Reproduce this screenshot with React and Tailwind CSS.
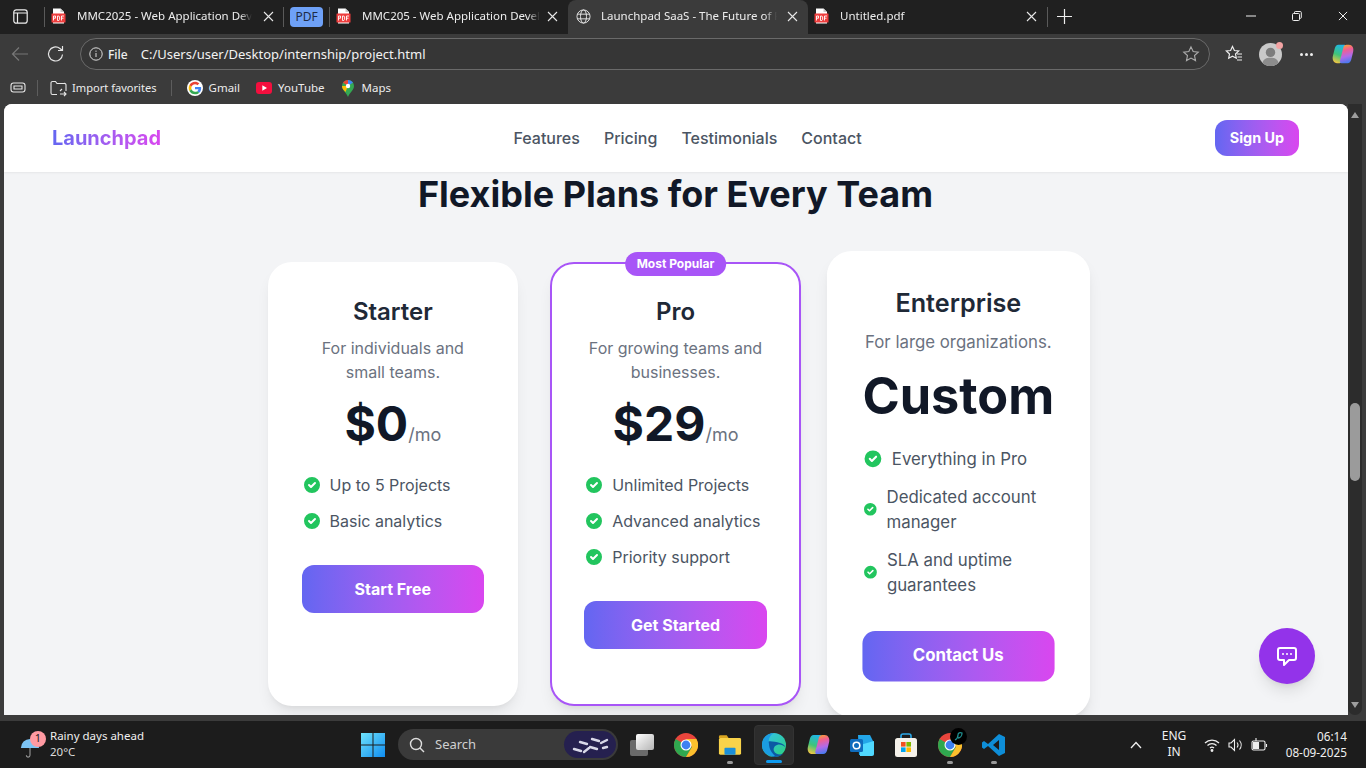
import React from "react";

const uiFont = { fontFamily: '"Noto Sans", "Open Sans", sans-serif' };

const PdfIcon = () => (
  <svg width="15" height="16" viewBox="0 0 15 16" className="shrink-0">
    <path d="M2 0.5h7.500l3.500 3.500v11.500H2z" fill="#fff" />
    <path d="M9.500 0.500l3.500 3.500H9.500z" fill="#c9c9c9" />
    <rect x="0.500" y="5.500" width="14" height="9" rx="0.500" fill="#ee3d3d" />
    <path d="M2.500 8v4.500M2.500 8h2v2.200h-2M6.500 8v4.500h1.300l.8-1V9l-.8-1H6.500M10.500 8v4.500M10.500 8h2.500M10.500 10.200h2" stroke="#fff" strokeWidth="0.900" fill="none" />
  </svg>
);

const X = ({ size = 11, color = "#e8e8e8" }) => (
  <svg width={size} height={size} viewBox="0 0 11 11" className="shrink-0">
    <path d="M1 1l9 9M10 1l-9 9" stroke={color} strokeWidth="1.100" />
  </svg>
);

const Globe = () => (
  <svg width="15" height="15" viewBox="0 0 16 16" fill="none" stroke="#e6e6e6" strokeWidth="1" className="shrink-0">
    <circle cx="8" cy="8" r="7" />
    <ellipse cx="8" cy="8" rx="3.200" ry="7" />
    <path d="M1.400 5.500h13.200M1.400 10.500h13.200" />
  </svg>
);

const Tab = ({ title, active, width, icon, iconMl, titleMl, textWidth, closeGap }) => (
  <div
    className={`flex items-center self-stretch pb-[2px] shrink-0 ${active ? "bg-[#3b3b3b] rounded-t-lg" : ""}`}
    style={{ width }}
  >
    <div className="w-[15px] flex justify-center" style={{ marginLeft: iconMl }}>
      {icon}
    </div>
    <span
      className="text-[11.5px] text-[#ededed] whitespace-nowrap overflow-hidden [mask-image:linear-gradient(90deg,#000_93%,transparent)]"
      style={{ width: textWidth, marginLeft: titleMl }}
    >
      {title}
    </span>
    <div style={{ marginLeft: closeGap }}>
      <X />
    </div>
  </div>
);

const TabDivider = () => <div className="w-px h-5 bg-[#5a5a5a] shrink-0" />;

const TabStrip = () => (
  <div className="flex items-center h-[34px] bg-[#202020] shrink-0" style={uiFont}>
    <div className="w-11 pr-1 pb-[2px] flex justify-center">
      <svg width="15" height="15" viewBox="0 0 15 15" fill="none" stroke="#eee" strokeWidth="1.200">
        <rect x="0.800" y="0.800" width="13.400" height="13.400" rx="2.500" />
        <path d="M0.800 4h13.400M4.500 4v10" />
      </svg>
    </div>
    <TabDivider />
    <Tab title="MMC2025 - Web Application Development" width={238} iconMl={6} titleMl={11} textWidth={175} closeGap={11} icon={<PdfIcon />} />
    <TabDivider />
    <div className="h-5 w-[33px] rounded bg-[#6ea1f7] text-[#1d2b45] text-[12px] flex items-center justify-center mx-[6px]">PDF</div>
    <TabDivider />
    <Tab title="MMC205 - Web Application Development" width={238} iconMl={6} titleMl={11} textWidth={178} closeGap={7} icon={<PdfIcon />} />
    <Tab title="Launchpad SaaS - The Future of Productivity" active width={240} iconMl={8} titleMl={10} textWidth={176} closeGap={10} icon={<Globe />} />
    <Tab title="Untitled.pdf" width={239} iconMl={6} titleMl={11} textWidth={176} closeGap={10} icon={<PdfIcon />} />
    <TabDivider />
    <div className="w-8 pb-[2px] flex items-center justify-center">
      <svg width="15" height="15" viewBox="0 0 15 15" stroke="#eee" strokeWidth="1.200">
        <path d="M7.500 0v15M0 7.500h15" />
      </svg>
    </div>
    <div className="ml-auto flex items-center pb-[2px]">
      <div className="w-[46px] flex justify-center">
        <svg width="10" height="10" viewBox="0 0 10 10" stroke="#eee">
          <path d="M0 5h10" />
        </svg>
      </div>
      <div className="w-[46px] flex justify-center">
        <svg width="10" height="10" viewBox="0 0 10 10" fill="none" stroke="#eee">
          <rect x="0.500" y="2.500" width="7" height="7" rx="1" />
          <path d="M2.500 2V1.200a.8.8 0 01.8-.7h5a1 1 0 011 1v5a.8.8 0 01-.8.8H8" />
        </svg>
      </div>
      <div className="w-[46px] flex justify-center">
        <X size={10} color="#eee" />
      </div>
    </div>
  </div>
);

const Copilot = ({ id, size = 22 }) => (
  <svg width={size} height={size} viewBox="0 0 24 24" className="block">
    <defs>
      <linearGradient id={`${id}A`} x1="0.600" y1="0" x2="0.300" y2="1">
        <stop offset="0" stopColor="#1fb6e8" />
        <stop offset="0.550" stopColor="#3fc47a" />
        <stop offset="1" stopColor="#f4c542" />
      </linearGradient>
      <linearGradient id={`${id}B`} x1="0.500" y1="1" x2="0.300" y2="0">
        <stop offset="0" stopColor="#f79a3f" />
        <stop offset="0.250" stopColor="#f25f8f" />
        <stop offset="0.600" stopColor="#b26ae8" />
        <stop offset="1" stopColor="#3a7cf0" />
      </linearGradient>
    </defs>
    <path d="M7 2h6.500c1.500 0 2.300 1.200 1.800 2.700L11.500 19.500C11 21 10 22 8 22H5.500C2 22 0 18.500 .9 14.500L3 6C3.600 3.500 5 2 7 2z" fill={`url(#${id}A)`} />
    <path transform="rotate(180 12 12)" d="M7 2h6.500c1.500 0 2.300 1.200 1.800 2.700L11.500 19.500C11 21 10 22 8 22H5.500C2 22 0 18.500 .9 14.500L3 6C3.600 3.500 5 2 7 2z" fill={`url(#${id}B)`} />
  </svg>
);

const Toolbar = () => (
  <div className="flex items-center h-10 bg-[#3b3b3b] shrink-0 text-[#efefef]" style={uiFont}>
    <div className="w-10 flex justify-center">
      <svg width="18" height="16" viewBox="0 0 18 16" fill="none" stroke="#777" strokeWidth="1.200">
        <path d="M17 8H1.500M8 1.500L1.500 8 8 14.500" />
      </svg>
    </div>
    <div className="w-[32px] flex justify-center">
      <svg width="18" height="18" viewBox="0 0 18 18" fill="none" stroke="#e6e6e6" strokeWidth="1.200">
        <path d="M15.500 9.500a7 7 0 11-2.600-6l2.100 1.700M15.500 1v4.500H11" />
      </svg>
    </div>
    <div className="ml-2 flex items-center h-8 w-[1130px] rounded-full border border-[#6a6a6a] bg-[#363636]">
      <div className="ml-[8px]">
        <svg width="14" height="14" viewBox="0 0 14 14" fill="none" stroke="#ddd">
          <circle cx="7" cy="7" r="6.200" />
          <path d="M7 6v4M7 3.600v1.200" />
        </svg>
      </div>
      <span className="ml-[5px] pt-px text-[12px] font-medium text-[#eee]">File</span>
      <span className="ml-[13px] pt-px text-[13px] text-[#f2f2f2]">C:/Users/user/Desktop/internship/project.html</span>
      <div className="ml-auto mr-[9px]">
        <svg width="18" height="18" viewBox="0 0 24 24" fill="none" stroke="#aaa" strokeWidth="1.500">
          <path d="M12 2.500l2.900 6.200 6.800.8-5 4.600 1.300 6.700-6-3.300-6 3.300 1.300-6.700-5-4.600 6.800-.8z" />
        </svg>
      </div>
    </div>
    <div className="ml-[15px]">
      <svg width="18" height="18" viewBox="0 0 18 18" fill="none" stroke="#eee" strokeWidth="1.200">
        <path d="M7.500 1.500l1.900 4 4.300.5-3.200 3 .8 4.200-3.800-2.100-3.800 2.100.8-4.200-3.200-3 4.300-.5zM12 9h5M12.500 12h4.500M12 15h5" />
      </svg>
    </div>
    <div className="ml-[16px] relative w-[23px] h-[23px] rounded-full bg-[#c9c9c9]">
      <svg width="23" height="23" viewBox="0 0 22 22" className="rounded-full">
        <circle cx="11" cy="9" r="4.500" fill="#7c7c7c" />
        <path d="M3 20c1-5 4-6 8-6s7 1 8 6c-2 1.500-5 2-8 2s-6-.5-8-2z" fill="#8c8c8c" />
      </svg>
      <div className="absolute -right-[1px] -top-[1px] w-[7px] h-[7px] rounded-full bg-[#f2a3a3]" />
    </div>
    <div className="ml-[18px] flex gap-[2px]">
      <div className="w-[3px] h-[3px] rounded-full bg-[#eee]" />
      <div className="w-[3px] h-[3px] rounded-full bg-[#eee]" />
      <div className="w-[3px] h-[3px] rounded-full bg-[#eee]" />
    </div>
    <div className="ml-[19px]">
      <Copilot id="cpTool" />
    </div>
  </div>
);

const GoogleG = ({ size = 16 }) => (
  <svg width={size} height={size} viewBox="0 0 48 48" className="shrink-0">
    <circle cx="24" cy="24" r="24" fill="#fff" />
    <path fill="#EA4335" d="M24 12.500c3 0 5.500 1 7.500 3l5.500-5.500C33.500 6.800 29.200 5 24 5 16.600 5 10.200 9.200 7.100 15.400l6.500 5c1.500-4.600 5.700-7.900 10.400-7.900z" />
    <path fill="#4285F4" d="M42.500 24.500c0-1.300-.1-2.600-.3-3.800H24v7.200h10.400c-.5 2.400-1.800 4.400-3.800 5.700l6.300 4.900c3.600-3.400 5.600-8.300 5.600-14z" />
    <path fill="#FBBC05" d="M13.600 28.100c-.4-1.200-.6-2.600-.6-4.100s.2-2.800.6-4.100l-6.500-5C5.800 17.500 5 20.700 5 24s.8 6.500 2.100 9.100z" />
    <path fill="#34A853" d="M24 43c5.200 0 9.500-1.700 12.900-4.600l-6.300-4.900c-1.700 1.200-3.900 1.900-6.600 1.900-4.700 0-8.800-3.200-10.400-7.500l-6.500 5C10.200 38.800 16.600 43 24 43z" />
  </svg>
);

const MapsPin = () => (
  <svg width="12" height="17" viewBox="0 0 12 17" className="shrink-0">
    <path d="M6 0a6 6 0 016 6c0 4-4 6-6 11C4 12 0 10 0 6a6 6 0 016-6z" fill="#34A853" />
    <path d="M1 2.500A6 6 0 016 0v6z" fill="#EA4335" />
    <path d="M6 0a6 6 0 015 2.500L6 6z" fill="#4285F4" />
    <path d="M0 6h6l-2.500 6C1.500 10 0 8.500 0 6z" fill="#FBBC05" />
    <circle cx="6" cy="6" r="2.200" fill="#fff" />
  </svg>
);

const BookmarkBar = () => (
  <div className="flex items-center h-[30px] pb-[2px] bg-[#3b3b3b] shrink-0 text-[11.5px] text-[#ececec]" style={uiFont}>
    <div className="ml-[10px]">
      <svg width="16" height="14" viewBox="0 0 16 14" fill="none" stroke="#e6e6e6" strokeWidth="1.100">
        <rect x="1" y="2" width="14" height="9" rx="2.500" />
        <path d="M4 5h8v3H4z" />
      </svg>
    </div>
    <div className="ml-[11px] w-px h-4 bg-[#5d5d5d]" />
    <div className="ml-[12px]">
      <svg width="17" height="17" viewBox="0 0 17 17" fill="none" stroke="#e6e6e6" strokeWidth="1.100">
        <path d="M1 13V3a1.500 1.500 0 011.500-1.500h3l1.500 2h7A1.500 1.500 0 0116 5v6M1 13a1.500 1.500 0 001.500 1.500H7M10 14h6M14 12l2 2-2 2M12 9l-2 2" />
      </svg>
    </div>
    <span className="ml-[5px] text-[11.1px]">Import favorites</span>
    <div className="ml-[14px] w-px h-4 bg-[#5d5d5d]" />
    <div className="ml-[15px]">
      <GoogleG />
    </div>
    <span className="ml-[6px]">Gmail</span>
    <div className="ml-[16px]">
      <svg width="16" height="12" viewBox="0 0 16 12" className="block">
        <rect width="16" height="12" rx="3" fill="#f40f3e" />
        <path d="M6.300 3.300v5.400L11 6z" fill="#fff" />
      </svg>
    </div>
    <span className="ml-[6px]">YouTube</span>
    <div className="ml-[17px]">
      <MapsPin />
    </div>
    <span className="ml-[8px]">Maps</span>
  </div>
);

const Check = () => (
  <svg className="w-5 h-5 text-[#22c55e] mr-2" fill="currentColor" viewBox="0 0 20 20">
    <path
      fillRule="evenodd"
      clipRule="evenodd"
      d="M10 18a8 8 0 100-16 8 8 0 000 16zm3.707-9.293a1 1 0 00-1.414-1.414L9 10.586 7.707 9.293a1 1 0 00-1.414 1.414l2 2a1 1 0 001.414 0l4-4z"
    />
  </svg>
);

const Plan = ({ name, desc, price, unit, features, cta, popular, scaled }) => (
  <div
    className={`relative w-[250.67px] shrink-0 rounded-3xl bg-white p-8 border-2 text-center shadow-[0_10px_15px_-3px_rgba(0,0,0,0.08),0_4px_6px_-4px_rgba(0,0,0,0.08)] ${
      popular ? "border-[#a855f7]" : "border-transparent"
    } ${scaled ? "scale-[1.05] z-10 ml-[1px] -translate-x-[1px]" : ""}`}
  >
    {popular && (
      <div className="absolute -top-3 left-1/2 -translate-x-1/2 bg-[#a855f7] text-white text-xs font-bold px-3 py-1 rounded-full whitespace-nowrap">
        Most Popular
      </div>
    )}
    <h3 className="text-2xl font-semibold text-[#1f2937]">{name}</h3>
    <p className="mt-2 text-[#6b7280]">{desc}</p>
    <div className="mt-4 mb-6 text-5xl font-bold text-[#111827]">
      {price}
      {unit && <span className="text-lg font-normal text-[#6b7280]">{unit}</span>}
    </div>
    <ul className="mb-8 space-y-3 text-left text-[#4b5563]">
      {features.map((f) => (
        <li key={f} className="flex items-center">
          <Check />
          {f}
        </li>
      ))}
    </ul>
    <button className={`w-full h-12 rounded-xl font-bold text-white bg-gradient-to-r from-[#6366f1] to-[#d946ef] ${scaled ? "pb-[2px]" : ""}`}>
      {cta}
    </button>
  </div>
);

const Page = () => (
  <div className="relative flex-1 h-full rounded-t-lg overflow-hidden bg-[#f3f4f6] font-['Inter',sans-serif]">
    <nav className="relative z-20 flex items-center justify-between h-[68px] bg-white pl-12 pr-[49px] shadow-[0_1px_2px_rgba(0,0,0,0.06)]">
      <span className="text-xl font-bold bg-gradient-to-r from-[#6366f1] to-[#d946ef] bg-clip-text text-transparent">
        Launchpad
      </span>
      <div className="flex gap-6 pr-[1px] font-medium text-[#4b5563]">
        <span>Features</span>
        <span>Pricing</span>
        <span>Testimonials</span>
        <span>Contact</span>
      </div>
      <button className="h-9 w-[84px] rounded-xl text-[14.4px] font-bold text-white bg-gradient-to-r from-[#6366f1] to-[#d946ef]">
        Sign Up
      </button>
    </nav>
    <h2 className="mt-[2px] mb-12 text-center text-4xl font-bold text-[#111827] leading-10 pr-[1px]">
      Flexible Plans for Every Team
    </h2>
    <div className="flex justify-center gap-8">
      <Plan
        name="Starter"
        desc="For individuals and small teams."
        price="$0"
        unit="/mo"
        features={["Up to 5 Projects", "Basic analytics"]}
        cta="Start Free"
      />
      <Plan
        name="Pro"
        desc="For growing teams and businesses."
        price="$29"
        unit="/mo"
        features={["Unlimited Projects", "Advanced analytics", "Priority support"]}
        cta="Get Started"
        popular
      />
      <Plan
        name="Enterprise"
        desc="For large organizations."
        price="Custom"
        features={["Everything in Pro", "Dedicated account manager", "SLA and uptime guarantees"]}
        cta="Contact Us"
        scaled
      />
    </div>
    <button className="absolute z-30 right-[33px] bottom-[31px] w-14 h-14 rounded-full bg-[#9333ea] flex items-center justify-center shadow-[0_10px_15px_-3px_rgba(0,0,0,0.1),0_4px_6px_-4px_rgba(0,0,0,0.1)]">
      <svg className="w-6 h-6" fill="none" stroke="#fff" strokeWidth="2" strokeLinecap="round" strokeLinejoin="round" viewBox="0 0 24 24">
        <path d="M8 10h.01M12 10h.01M16 10h.01M9 16H5a2 2 0 01-2-2V6a2 2 0 012-2h14a2 2 0 012 2v8a2 2 0 01-2 2h-5l-5 5v-5z" />
      </svg>
    </button>
  </div>
);

const Scrollbar = () => (
  <div className="w-3.5 h-full bg-[#2c2c2c] rounded-b-lg flex flex-col items-center justify-between pt-2 pb-[7px] relative">
    <div className="w-0 h-0 border-x-[4.5px] border-x-transparent border-b-[6px] border-b-[#9d9d9d]" />
    <div className="absolute left-[2px] top-[299px] w-2.5 h-[78px] rounded-full bg-[#9b9b9b]" />
    <div className="w-0 h-0 border-x-[4.5px] border-x-transparent border-t-[6px] border-t-[#9d9d9d]" />
  </div>
);

const TaskIcon = ({ className, dot, children }) => (
  <div className={`relative flex items-center justify-center ${className}`}>
    {children}
    {dot && <div className="absolute -bottom-[7px] left-1/2 -translate-x-1/2 w-[6px] h-[3px] rounded-full bg-[#9a9a9a]" />}
  </div>
);

const Chrome = () => (
  <svg width="24" height="24" viewBox="0 0 24 24" className="block">
    <circle cx="12" cy="12" r="12" fill="#e8453c" />
    <path d="M12 12L1.600 6A12 12 0 000 12c0 6.600 5.400 12 12 12l6-10z" fill="#2fa84f" />
    <path d="M12 6h10.400A12 12 0 0112 24l6-10z" fill="#fbc02d" />
    <circle cx="12" cy="12" r="5.500" fill="#fff" />
    <circle cx="12" cy="12" r="4.400" fill="#3f81f2" />
  </svg>
);

const Taskbar = () => (
  <div className="flex items-center h-[47px] bg-[#1c1c1c] shrink-0 text-[#f0f0f0] relative" style={uiFont}>
    <div className="ml-[20px] relative w-[22px] h-[26px] flex items-end">
      <svg width="20" height="20" viewBox="0 0 20 22" fill="none">
        <path d="M0 11a10 10 0 0120 0z" fill="#7cc4f5" />
        <path d="M10 11v8a2 2 0 01-4 0" stroke="#9a9a9a" strokeWidth="1.200" />
      </svg>
      <div className="absolute -top-[1px] left-[10px] w-4 h-4 rounded-full bg-[#ff9aa2] text-[#222] text-[11px] flex items-center justify-center">1</div>
    </div>
    <div className="ml-[8px] pb-[1px] text-[11.5px] leading-[16px]">
      <div>Rainy days ahead</div>
      <div className="text-[#ddd]">20°C</div>
    </div>
    <div className="ml-[217px]">
      <svg width="24" height="24" viewBox="0 0 24 24" className="block">
        <defs>
          <linearGradient id="win" x1="0" y1="0" x2="1" y2="1">
            <stop offset="0" stopColor="#6fe3fb" />
            <stop offset="1" stopColor="#0f8cf0" />
          </linearGradient>
        </defs>
        <path d="M0 0h11.500v11.500H0zM12.500 0H24v11.500H12.500zM0 12.500h11.500V24H0zM12.500 12.500H24V24H12.500z" fill="url(#win)" />
      </svg>
    </div>
    <div className="ml-[13px] w-[220px] h-[31px] rounded-full bg-[#3a3a3a] flex items-center overflow-hidden">
      <svg className="ml-[11px]" width="16" height="16" viewBox="0 0 16 16" fill="none" stroke="#ddd" strokeWidth="1.400">
        <circle cx="7" cy="7" r="5.500" />
        <path d="M11 11l4 4" />
      </svg>
      <span className="ml-[10px] text-[13px] text-[#d0d0d0]">Search</span>
      <div className="ml-auto mr-[2px] w-[52px] h-[27px] rounded-full bg-[#25204f] flex items-center justify-center">
        <svg width="44" height="22" viewBox="0 0 44 22" stroke="#d8d8e8" strokeWidth="2.400" strokeLinecap="round">
          <path d="M6 15l7 2M12 8l7 2M22 13l7 2M24 5l7 2M33 9l6-3M16 18l5-4M35 14l4-1" />
        </svg>
      </div>
    </div>
    <div className="ml-[12px] relative w-[24px] h-[22px]">
      <div className="absolute left-0 bottom-0 w-[18px] h-[16px] rounded-[2px] bg-[#6a6a6a]" />
      <div className="absolute right-0 top-0 w-[18px] h-[16px] rounded-[2px] bg-gradient-to-br from-[#ffffff] to-[#b5b5b5]" />
    </div>
    <div className="ml-[20px] flex items-center">
      <Chrome />
    </div>
    <TaskIcon className="ml-[20px]" dot>
      <svg width="24" height="24" viewBox="0 0 26 24" className="block">
        <path d="M1 3a1.500 1.500 0 011.500-1.500h7l2 3H1z" fill="#d9a520" />
        <rect x="1" y="4.500" width="24" height="18" rx="1.500" fill="#f8d34a" />
        <rect x="7" y="15" width="12" height="7.500" rx="1" fill="#1b8fd8" />
      </svg>
    </TaskIcon>
    <div className="ml-[12px] relative w-10 h-10 rounded bg-[#2c2c2c] border border-[#333] flex items-center justify-center">
      <svg width="24" height="24" viewBox="0 0 24 24">
        <defs>
          <linearGradient id="edgeA" x1="0" y1="0" x2="1" y2="1">
            <stop offset="0" stopColor="#35c1f1" />
            <stop offset="1" stopColor="#2bd07c" />
          </linearGradient>
        </defs>
        <circle cx="12" cy="12" r="12" fill="url(#edgeA)" />
        <path d="M1 11C2 17 6 24 13 24c3 0 6-1 8-3-4 1-8 0-9-3-1-2 0-5 3-6 3-1 6 0 8 2 0-2-2-3-5-4-7-2-14-3-17 1z" fill="#0c59a4" />
        <path d="M0 12C0 5 5 0 12 0c-4 2-6 6-5 11 0 5 3 9 6 12C6 24 0 19 0 12z" fill="#1b9de2" />
      </svg>
      <div className="absolute bottom-[1px] left-1/2 -translate-x-1/2 w-4 h-[3px] rounded-full bg-[#0f9bf0]" />
    </div>
    <div className="ml-[13px]">
      <Copilot id="cpTask" size={23} />
    </div>
    <div className="ml-[20px] relative w-[24px] h-[24px]">
      <svg width="24" height="24" viewBox="0 0 24 24" className="block">
        <path d="M8 2l12 0 4 8v10a2 2 0 01-2 2H9z" fill="#23a6e8" />
        <path d="M10 12l14-4v13a2 2 0 01-2 2H10z" fill="#50d9ff" />
        <rect x="0" y="6" width="13" height="13" rx="1.500" fill="#0f6cbd" />
        <circle cx="6.500" cy="12.500" r="3.300" fill="none" stroke="#fff" strokeWidth="1.600" />
      </svg>
    </div>
    <div className="ml-[20px]">
      <svg width="24" height="26" viewBox="0 0 24 26" className="block">
        <path d="M7 7V4a2 2 0 012-2h6a2 2 0 012 2v3" fill="none" stroke="#2ba8e8" strokeWidth="1.600" />
        <rect x="1" y="6" width="22" height="19" rx="2.500" fill="#f5f1ea" />
        <rect x="7" y="10" width="4.600" height="4.600" fill="#f25022" />
        <rect x="12.400" y="10" width="4.600" height="4.600" fill="#7fba00" />
        <rect x="7" y="15.400" width="4.600" height="4.600" fill="#00a4ef" />
        <rect x="12.400" y="15.400" width="4.600" height="4.600" fill="#ffb900" />
      </svg>
    </div>
    <TaskIcon className="ml-[20px]" dot>
      <div className="relative">
        <Chrome />
        <div className="absolute -top-[5px] -right-[5px] w-[17px] h-[17px] rounded-full bg-black flex items-center justify-center">
          <svg width="11" height="11" viewBox="0 0 11 11" fill="none" stroke="#1f8f8f" strokeWidth="1.300">
            <path d="M2 9c2-1 3-3 3-5s2-3 4-2c0 3-2 5-4 5" />
          </svg>
        </div>
      </div>
    </TaskIcon>
    <TaskIcon className="ml-[20px]" dot>
      <svg width="24" height="24" viewBox="0 0 24 24" className="block">
        <path d="M17 1l6 3v16l-6 3L6 13l-4 3-2-1.500V9.500L2 8l4 3zM17 7l-6 5 6 5z" fill="#0e8ed8" fillRule="evenodd" />
      </svg>
    </TaskIcon>
    <div className="ml-[124px]">
      <svg width="12" height="8" viewBox="0 0 12 8" fill="none" stroke="#eee" strokeWidth="1.300" className="block">
        <path d="M1 7l5-5.500L11 7" />
      </svg>
    </div>
    <div className="ml-[19px] pb-[1px] text-[12px] leading-[16px] text-center w-[26px]">
      <div>ENG</div>
      <div>IN</div>
    </div>
    <div className="ml-[17px]">
      <svg width="16" height="14" viewBox="0 0 16 14" fill="none" stroke="#eee" strokeWidth="1.300" className="block">
        <path d="M1 5a10 10 0 0114 0M3.500 7.500a6.500 6.500 0 019 0M6 10a3 3 0 014 0" />
        <circle cx="8" cy="12.500" r="0.800" fill="#eee" />
      </svg>
    </div>
    <div className="ml-[8px]">
      <svg width="14" height="14" viewBox="0 0 14 14" fill="none" stroke="#eee" strokeWidth="1.100" className="block">
        <path d="M1 5h2L6.500 1.500v11L3 9H1zM9 4.500a4 4 0 010 5M11.500 2.500a7 7 0 010 9" />
      </svg>
    </div>
    <div className="ml-[9px]">
      <svg width="17" height="14" viewBox="0 0 17 14" fill="none" stroke="#eee" strokeWidth="1.100" className="block">
        <rect x="1" y="3" width="13" height="9" rx="1.500" />
        <path d="M15.500 6v3" />
        <path d="M2.500 4.500h5v6h-5zM5 0v3" fill="#eee" />
      </svg>
    </div>
    <div className="ml-auto mr-[19px] pb-[1px] text-[11.75px] leading-[16px] text-right">
      <div>06:14</div>
      <div>08-09-2025</div>
    </div>
  </div>
);

export default function App() {
  return (
    <div className="w-[1366px] h-[768px] flex flex-col overflow-hidden bg-[#3b3b3b]">
      <TabStrip />
      <Toolbar />
      <BookmarkBar />
      <div className="flex-1 min-h-0 flex pl-1 pr-1 pb-[6px]">
        <Page />
        <Scrollbar />
      </div>
      <Taskbar />
    </div>
  );
}
